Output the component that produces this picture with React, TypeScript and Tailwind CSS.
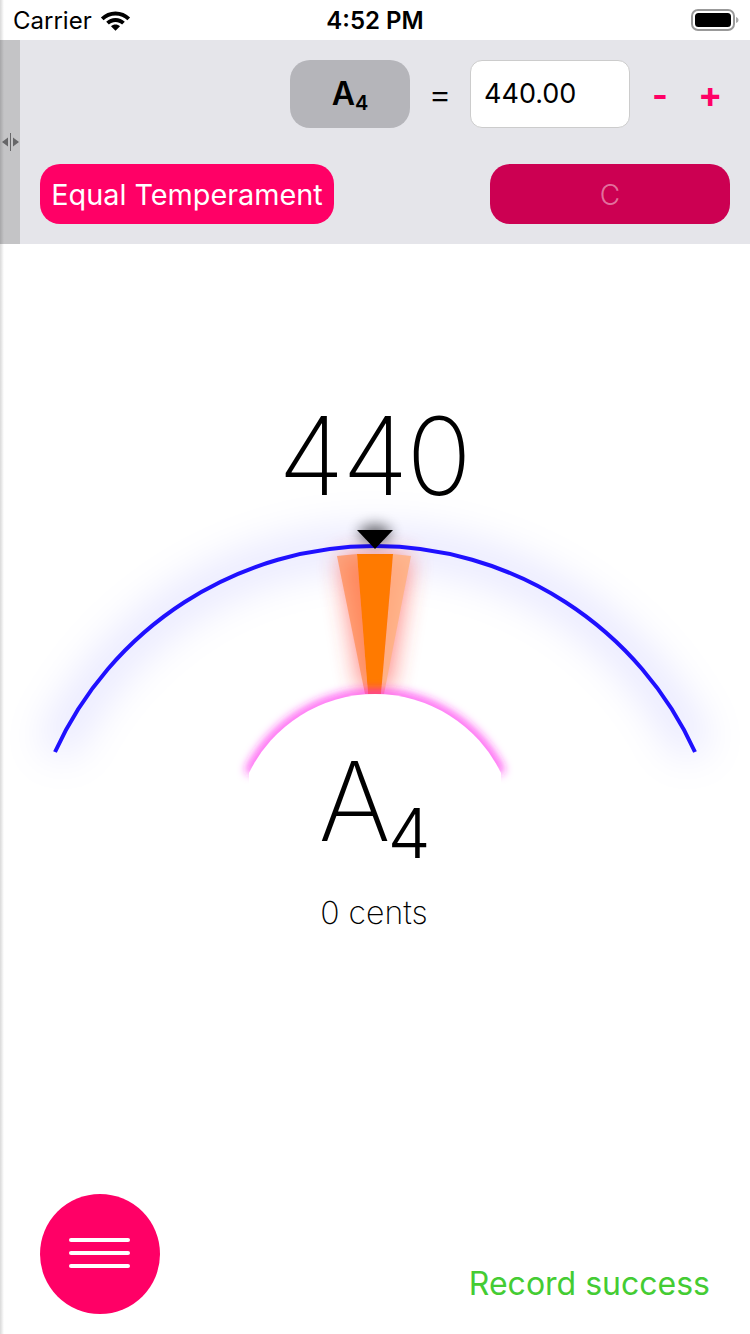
import React from 'react';

const StatusBar = () => (
  <div className="h-10 flex items-center justify-between pl-[13px] pr-[11px] pt-[2px] bg-white text-black text-2xl">
    <div className="w-[200px] flex items-center gap-[8px]">
      <span>Carrier</span>
      <svg width="31" height="22" viewBox="0 0 30 22" className="-mt-[2px]">
        <path d="M15 2.500C9.300 2.500 4.300 4.700.4 8.400l2.700 2.800C6.200 8.200 10.400 6.400 15 6.400s8.800 1.800 11.900 4.800l2.700-2.800C25.700 4.700 20.700 2.500 15 2.500z" fill="#000" />
        <path d="M15 9.100c-3.600 0-6.900 1.400-9.300 3.700l2.700 2.800c1.700-1.700 4-2.700 6.600-2.700s4.900 1 6.600 2.700l2.700-2.800c-2.400-2.300-5.700-3.700-9.300-3.700z" fill="#000" />
        <path d="M15 15.500c-1.800 0-3.300.7-4.500 1.700l4.500 4.600 4.500-4.600c-1.200-1-2.700-1.700-4.500-1.700z" fill="#000" />
      </svg>
    </div>
    <span className="font-semibold -ml-[2px]">4:52 PM</span>
    <div className="w-[200px] flex justify-end -mt-[2px]">
      <svg width="48" height="22" viewBox="0 0 48 22">
        <rect x="1" y="1" width="42" height="20" rx="6" fill="none" stroke="#999" strokeWidth="2" />
        <rect x="4" y="4" width="36" height="14" rx="3.500" fill="#000" />
        <path d="M45 8c1.500.5 2.500 1.500 2.500 3s-1 2.500-2.500 3z" fill="#aaa" />
      </svg>
    </div>
  </div>
);

const Settings = () => (
  <div className="h-[204px] flex bg-[#e5e5ea]">
    <div className="w-5 flex items-center justify-center bg-[#c4c4c6]">
      <svg width="20" height="20" viewBox="0 0 20 20">
        <path d="M2 10l6-4.500v9z" fill="#666668" />
        <path d="M19 10l-6-4.500v9z" fill="#666668" />
        <rect x="10" y="1" width="1" height="18" fill="#666668" />
      </svg>
    </div>
    <div className="flex-1 pt-5 pl-5 pr-5">
      <div className="flex items-center h-[68px]">
        <div className="ml-[250px] w-[120px] h-[68px] rounded-[20px] bg-[#b5b5ba] flex items-center justify-center font-semibold text-[32px] text-black">
          <span>A<sub className="text-[20px]">4</sub></span>
        </div>
        <span className="w-[60px] text-center text-[36px] font-light text-black">=</span>
        <div className="w-40 h-[68px] rounded-xl bg-white border border-[#cccccc] flex items-center pl-[13px] text-[27px] text-black">440.00</div>
        <span className="w-[46px] pl-[22px] text-[34px] font-bold text-[#ff0066]">-</span>
        <span className="ml-[22px] text-[36px] font-bold text-[#ff0066]">+</span>
      </div>
      <div className="mt-9 flex justify-between">
        <button className="h-[60px] w-[294px] rounded-[20px] bg-[#ff0066] text-white text-[28.8px] pt-[2px]">Equal Temperament</button>
        <button className="h-[60px] w-60 rounded-[20px] bg-[#cc0052] text-white/45 text-[28px] font-light pt-[2px]">C</button>
      </div>
    </div>
  </div>
);

const Gauge = () => (
  <svg width="750" height="320" viewBox="0 480 750 320" className="block -mt-9">
    <defs>
      <filter id="blueGlow" x="-20%" y="-40%" width="140%" height="180%">
        <feGaussianBlur stdDeviation="20" />
      </filter>
      <filter id="redGlow" x="-200%" y="-30%" width="500%" height="160%">
        <feGaussianBlur stdDeviation="12" />
      </filter>
      <filter id="pinkGlow" x="-20%" y="-40%" width="140%" height="180%">
        <feGaussianBlur stdDeviation="5" />
      </filter>
      <filter id="pointerGlow" x="-100%" y="-100%" width="300%" height="300%">
        <feGaussianBlur stdDeviation="7" />
      </filter>
    </defs>
    <path d="M55 752A351.600 351.600 0 0 1 695 752" fill="none" stroke="#1f10ff" strokeOpacity="0.1" strokeWidth="34" filter="url(#blueGlow)" />
    <path d="M340 556L410 556L388 690L362 690Z" fill="#ff3b30" opacity="0.65" filter="url(#redGlow)" />
    <path d="M337 556L357 554L368 694L365 694Z" fill="#ff8a50" opacity="0.7" />
    <path d="M393 554L411 556L384 694L381 694Z" fill="#ffb080" opacity="0.85" />
    <path d="M357 554L393 554L381 694L368 694Z" fill="#ff7a00" />
    <path d="M249 773A140 140 0 0 1 501 773" fill="none" stroke="#ff22ee" strokeOpacity="0.8" strokeWidth="9" filter="url(#pinkGlow)" />
    <path d="M249 800L249 773A140 140 0 0 1 501 773L501 800Z" fill="#fff" />
    <path d="M55 752A351.600 351.600 0 0 1 695 752" fill="none" stroke="#1f10ff" strokeWidth="4" />
    <ellipse cx="375" cy="534" rx="16" ry="9" fill="#000" opacity="0.6" filter="url(#pointerGlow)" />
    <path d="M357 530L393 530L375 549Z" fill="#000" />
  </svg>
);

export default function App() {
  return (
    <div className="relative w-[750px] h-[1334px] overflow-hidden bg-white font-['Inter',sans-serif]">
      <StatusBar />
      <Settings />
      <main className="h-[1090px] flex flex-col">
        <div className="pt-[152px] pr-[2px] h-[272px] text-center text-[108px] leading-[120px] tracking-[-2px] font-extralight text-black">440</div>
        <Gauge />
        <div className="-mt-[54px] pr-[1px] text-center text-[110px] leading-[110px] tracking-[-3px] font-extralight text-black">
          A<sub className="text-[68px] tracking-normal font-light">4</sub>
        </div>
        <div className="mt-[33px] pr-[2px] text-center text-[32px] font-extralight text-black">0 cents</div>
        <div className="mt-auto flex items-end justify-between pl-10 pr-10 pb-5">
          <button className="w-[120px] h-[120px] pr-[1px] pb-[2px] rounded-full bg-[#ff0066] flex flex-col items-center justify-center gap-[9px]">
            <span className="block w-[61px] h-1 rounded-full bg-white" />
            <span className="block w-[61px] h-1 rounded-full bg-white" />
            <span className="block w-[61px] h-1 rounded-full bg-white" />
          </button>
          <span className="mb-[6px] text-[32px] text-[#44cc33]">Record success</span>
        </div>
      </main>
      <div className="absolute left-0 top-0 bottom-0 w-1 bg-gradient-to-r from-black/15 to-transparent" />
    </div>
  );
}
